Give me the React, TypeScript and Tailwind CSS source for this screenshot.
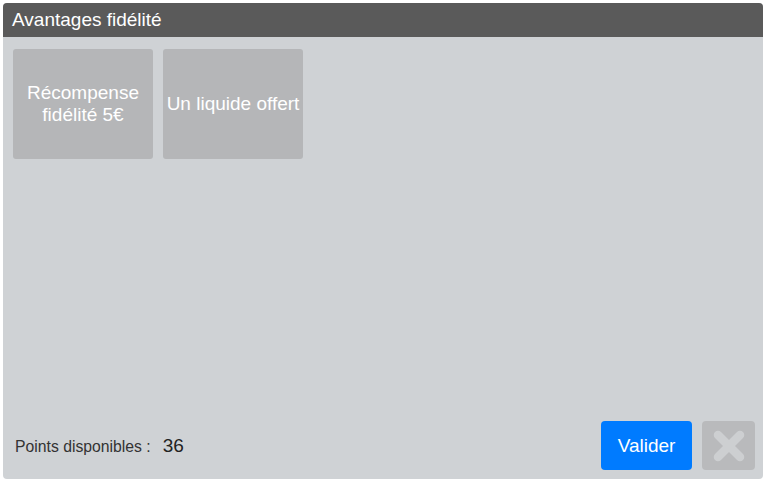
import React from "react";

const rewards = ["Récompense fidélité 5€", "Un liquide offert"];

export default function App() {
  return (
    <div
      className="w-[766px] h-[482px] bg-white p-[3px]"
      style={{ fontFamily: '"Liberation Sans", Arial, sans-serif' }}
    >
      <div className="flex flex-col h-full rounded-[4px] overflow-hidden bg-[#cfd2d5]">
        <div className="h-[34px] bg-[#5a5a5a] flex items-center px-[9px]">
          <h1 className="text-[19px] text-white">Avantages fidélité</h1>
        </div>

        <div className="flex-1 flex gap-[10px] px-[10px] pt-[12px] items-start">
          {rewards.map((label) => (
            <button
              key={label}
              className="w-[140px] h-[110px] rounded-[3px] bg-[#b5b6b8] text-white text-[19px] leading-[22px] flex items-center justify-center text-center px-[2px]"
            >
              {label}
            </button>
          ))}
        </div>

        <div className="flex items-center h-[49px] mb-[9px] pl-[12px] pr-[8px]">
          <span className="text-[15.75px] text-[#333] mt-[2px]">Points disponibles :</span>
          <span className="text-[19px] text-[#222] ml-[12px] mt-[1px]">36</span>
          <div className="ml-auto flex gap-[10px]">
            <button className="w-[91px] h-[49px] rounded-[4px] bg-[#007bff] text-white text-[19px] pt-[2px]">
              Valider
            </button>
            <button className="w-[53px] h-[49px] rounded-[4px] bg-[#b9babc] flex items-center justify-center">
              <svg width="32" height="32" viewBox="0 0 32 32">
                <path
                  d="M5 5 L27 27 M27 5 L5 27"
                  stroke="#cdcfd1"
                  strokeWidth="8.5"
                  strokeLinecap="round"
                  fill="none"
                />
              </svg>
            </button>
          </div>
        </div>
      </div>
    </div>
  );
}
